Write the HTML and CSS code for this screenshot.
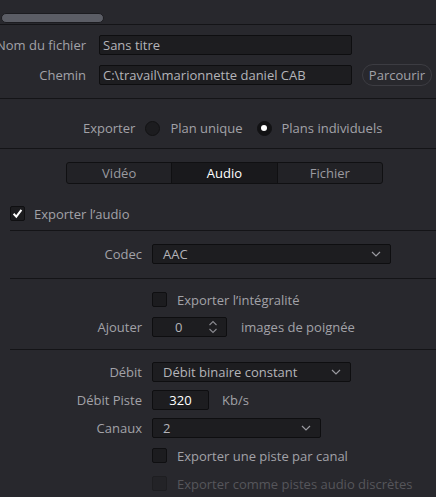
FILE: index.html
```html
<!DOCTYPE html>
<html lang="fr">
<head>
<meta charset="utf-8">
<link rel="stylesheet" href="styles.css">
</head>
<body>
<div class="topbar"><div class="pill"></div></div>

<section class="sec-file">
  <div class="frow">
    <div class="lbl">Nom du fichier</div>
    <div class="field w253">Sans titre</div>
  </div>
  <div class="frow">
    <div class="lbl">Chemin</div>
    <div class="field w253">C:\travail\marionnette daniel CAB</div>
    <button class="btn">Parcourir</button>
  </div>
</section>

<section class="sec-export">
  <span class="txt">Exporter</span>
  <span class="radio"></span><span class="txt">Plan unique</span>
  <span class="radio on"></span><span class="txt">Plans individuels</span>
</section>

<section class="sec-tabs">
  <div class="tabs">
    <div class="tab">Vidéo</div>
    <div class="tab active">Audio</div>
    <div class="tab">Fichier</div>
  </div>
  <label class="check-row first">
    <span class="cb checked"><svg viewBox="0 0 15 15" width="15" height="15"><path d="M3.6 7.8 L6.3 10.6 L11.4 3.8" fill="none" stroke="#fff" stroke-width="2"/></svg></span>
    <span class="txt">Exporter l’audio</span>
  </label>
</section>

<section class="grp g-codec">
  <div class="grow frow20">
    <div class="glbl">Codec</div>
    <div class="field sel w239"><span>AAC</span><svg class="chev" viewBox="0 0 10 6" width="10" height="6"><path d="M1 1 L5 5 L9 1" fill="none" stroke="#9a9aa0" stroke-width="1.2"/></svg></div>
  </div>
</section>

<section class="grp g-handles">
  <div class="grow cbrow">
    <div class="glbl"></div>
    <span class="cb"></span><span class="txt ml10">Exporter l’intégralité</span>
  </div>
  <div class="grow frow20">
    <div class="glbl">Ajouter</div>
    <div class="field spin"><span class="spinval">0</span><svg class="spinarr" viewBox="0 0 10 16" width="10" height="16"><path d="M1.5 6 L5 2.5 L8.5 6 M1.5 10 L5 13.5 L8.5 10" fill="none" stroke="#8a8a90" stroke-width="1.1"/></svg></div>
    <span class="txt ml14">images de poignée</span>
  </div>
</section>

<section class="grp g-rate">
  <div class="grow frow20">
    <div class="glbl">Débit</div>
    <div class="field sel w199"><span>Débit binaire constant</span><svg class="chev" viewBox="0 0 10 6" width="10" height="6"><path d="M1 1 L5 5 L9 1" fill="none" stroke="#9a9aa0" stroke-width="1.2"/></svg></div>
  </div>
  <div class="grow frow20">
    <div class="glbl">Débit Piste</div>
    <div class="field num">320</div>
    <span class="txt ml13">Kb/s</span>
  </div>
  <div class="grow frow20">
    <div class="glbl">Canaux</div>
    <div class="field sel w169"><span>2</span><svg class="chev" viewBox="0 0 10 6" width="10" height="6"><path d="M1 1 L5 5 L9 1" fill="none" stroke="#9a9aa0" stroke-width="1.2"/></svg></div>
  </div>
  <div class="grow cbrow c1">
    <div class="glbl"></div>
    <span class="cb"></span><span class="txt ml10">Exporter une piste par canal</span>
  </div>
  <div class="grow cbrow c2">
    <div class="glbl"></div>
    <span class="cb disabled"></span><span class="txt ml10 dim">Exporter comme pistes audio discrètes</span>
  </div>
</section>
</body>
</html>
```

FILE: styles.css
```css
* { box-sizing: border-box; }
html, body { margin: 0; padding: 0; }
body {
  background: #28282d;
  font-family: "Open Sans", "Noto Sans", sans-serif;
  font-size: 13px;
  color: #a2a2a8;
  width: 436px;
  height: 497px;
  overflow: hidden;
}
.topbar {
  height: 25px;
  padding: 13px 0 0 1px;
  border-bottom: 1px solid #141417;
}
.pill {
  width: 103px;
  height: 10px;
  border-radius: 5px;
  background: #5b5d65;
  border: 1px solid #1c1c20;
}
.sec-file {
  padding: 10px 0 13px;
  border-bottom: 1px solid #141417;
  display: flex;
  flex-direction: column;
  gap: 10px;
}
.frow {
  display: flex;
  align-items: center;
  height: 20px;
}
.lbl {
  width: 86px;
  flex: none;
  display: flex;
  justify-content: flex-end;
  white-space: nowrap;
  margin-right: 13px;
}
.field {
  height: 20px;
  background: #1d1d20;
  border: 1px solid #0e0e10;
  border-radius: 2px;
  color: #b4b4b9;
  padding: 0 0 0 3px;
  display: flex;
  align-items: center;
  white-space: nowrap;
  flex: none;
}
.w253 { width: 253px; }
.w239 { width: 239px; }
.w199 { width: 199px; }
.w169 { width: 169px; }
.btn {
  margin-left: 10px;
  width: 70px;
  height: 22px;
  border-radius: 11px;
  border: 1px solid #3c3c42;
  background: #28282d;
  color: #a2a2a8;
  font: inherit;
  padding: 0;
}
.sec-export {
  height: 50px;
  border-bottom: 1px solid #141417;
  display: flex;
  align-items: center;
  padding: 9px 0 0 83px;
}
.radio {
  width: 15px;
  height: 15px;
  border-radius: 50%;
  background: #1c1c1f;
  border: 1px solid #121214;
  margin: 0 10px 0 10px;
  flex: none;
  position: relative;
}
.sec-export .radio.on { margin-left: 14px; background: #121214; }
.radio.on::after {
  content: "";
  position: absolute;
  left: 3.5px;
  top: 3.5px;
  width: 6px;
  height: 6px;
  border-radius: 50%;
  background: #fff;
}
.sec-tabs {
  padding: 13px 0 0;
}
.tabs {
  margin-left: 66px;
  width: 317px;
  height: 22px;
  display: flex;
  border: 1px solid #101012;
  border-radius: 3px;
  background: #222226;
  overflow: hidden;
}
.tab {
  flex: 1;
  display: flex;
  align-items: center;
  justify-content: center;
  color: #9a9aa0;
}
.tab + .tab { border-left: 1px solid #101012; }
.tab.active { background: #19191c; color: #fff; }
.check-row {
  display: flex;
  align-items: center;
  height: 15px;
  margin: 22px 0 0 10px;
}
.check-row .txt { margin-left: 9px; }
.cb {
  width: 15px;
  height: 15px;
  flex: none;
  border-radius: 2px;
  background: #1c1c1f;
  border: 1px solid #0f0f11;
  display: flex;
  align-items: center;
  justify-content: center;
}
.cb svg { display: block; margin: -1px; }
.cb.disabled { background: #232327; border-color: #1e1e21; }
.grp {
  margin-left: 10px;
  border-top: 1px solid #141417;
  display: flex;
  flex-direction: column;
}
.g-codec { margin-top: 9px; padding: 13px 0 14px; }
.g-handles { padding: 13px 0 12px; gap: 10px; }
.g-rate { padding: 12px 0 0; gap: 8px; }
.grow {
  display: flex;
  align-items: center;
}
.frow20 { height: 20px; }
.cbrow { height: 15px; }
.g-rate .c1 { margin-top: 2px; }
.g-rate .c2 { margin-top: 5px; }
.glbl {
  width: 132px;
  flex: none;
  text-align: right;
  margin-right: 10px;
  white-space: nowrap;
}
.sel {
  justify-content: space-between;
  padding: 0 9px 0 10px;
}
.chev { display: block; }
.spin {
  width: 75px;
  padding: 0 0 0 22px;
  justify-content: space-between;
}
.spinarr { margin-right: 8px; display: block; }
.num {
  width: 57px;
  justify-content: center;
  padding: 0;
  color: #fff;
}
.ml10 { margin-left: 10px; }
.ml13 { margin-left: 13px; }
.ml14 { margin-left: 14px; }
.dim { color: #56565b; }
```
